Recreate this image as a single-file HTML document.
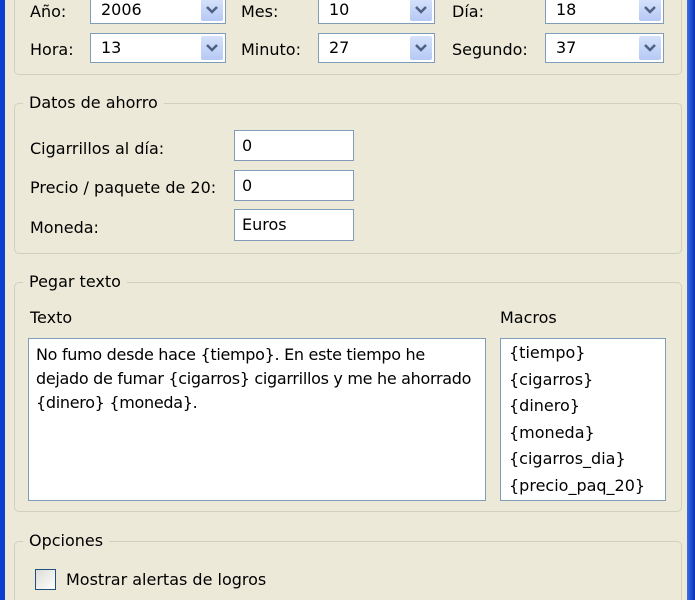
<!DOCTYPE html>
<html style="overflow:hidden;height:600px"><head><meta charset="utf-8"><style>
body{margin:0;width:695px;height:600px;overflow:hidden;background:#ece9d8;font-family:Tahoma,"DejaVu Sans","Liberation Sans",sans-serif;font-size:16px;color:#000;position:relative}
.a{position:absolute}
.edgeL{left:0;top:0;width:5px;height:600px;background:#0a3fd0}
.edgeR{left:687px;top:0;width:8px;height:600px;background:linear-gradient(90deg,#3a6ee8,#0930b8)}
.g{position:absolute;border:1px solid #d0d0bf;border-radius:5px}
.gt{position:absolute;background:#ece9d8;padding:0 6px;line-height:20px}
.box{position:absolute;background:#fff;border:1px solid #7f9db9;box-sizing:border-box;padding-left:10px;line-height:26px}
.btn{position:absolute;right:2px;top:2px;bottom:2px;width:22px;background:linear-gradient(#d6e2fb,#b6c9f5);border-radius:2px}
.btn svg{position:absolute;left:5px;top:50%;margin-top:-5px}
.l{position:absolute;line-height:20px}
</style></head><body>
<div class="a edgeL"></div><div class="a edgeR"></div>
<div class="g" style="left:14px;top:-10px;width:666px;height:83px"></div>
<div class="l" style="left:30px;top:2px">Año:</div>
<div class="box" style="left:90px;top:-4px;width:136px;height:28px">2006<div class="btn"><svg width="12" height="10"><path d="M1 2 L6 7 L11 2" stroke="#4d6185" stroke-width="2.5" fill="none"/></svg></div></div>
<div class="l" style="left:241px;top:2px">Mes:</div>
<div class="box" style="left:318px;top:-4px;width:117px;height:28px">10<div class="btn"><svg width="12" height="10"><path d="M1 2 L6 7 L11 2" stroke="#4d6185" stroke-width="2.5" fill="none"/></svg></div></div>
<div class="l" style="left:452px;top:2px">Día:</div>
<div class="box" style="left:545px;top:-4px;width:119px;height:28px">18<div class="btn"><svg width="12" height="10"><path d="M1 2 L6 7 L11 2" stroke="#4d6185" stroke-width="2.5" fill="none"/></svg></div></div>
<div class="l" style="left:30px;top:40px">Hora:</div>
<div class="box" style="left:90px;top:33px;width:136px;height:30px;line-height:28px">13<div class="btn"><svg width="12" height="10"><path d="M1 2 L6 7 L11 2" stroke="#4d6185" stroke-width="2.5" fill="none"/></svg></div></div>
<div class="l" style="left:241px;top:40px">Minuto:</div>
<div class="box" style="left:318px;top:33px;width:117px;height:30px;line-height:28px">27<div class="btn"><svg width="12" height="10"><path d="M1 2 L6 7 L11 2" stroke="#4d6185" stroke-width="2.5" fill="none"/></svg></div></div>
<div class="l" style="left:452px;top:40px">Segundo:</div>
<div class="box" style="left:545px;top:33px;width:119px;height:30px;line-height:28px">37<div class="btn"><svg width="12" height="10"><path d="M1 2 L6 7 L11 2" stroke="#4d6185" stroke-width="2.5" fill="none"/></svg></div></div>

<div class="g" style="left:14px;top:103px;width:666px;height:149px"></div>
<div class="gt" style="left:23px;top:93px">Datos de ahorro</div>
<div class="l" style="left:30px;top:139px">Cigarrillos al día:</div>
<div class="box" style="left:234px;top:130px;width:120px;height:31px;padding-left:7px;line-height:29px">0</div>
<div class="l" style="left:30px;top:178px">Precio / paquete de 20:</div>
<div class="box" style="left:234px;top:170px;width:120px;height:31px;padding-left:7px;line-height:29px">0</div>
<div class="l" style="left:30px;top:218px">Moneda:</div>
<div class="box" style="left:234px;top:209px;width:120px;height:32px;padding-left:7px;line-height:30px">Euros</div>

<div class="g" style="left:14px;top:282px;width:666px;height:228px"></div>
<div class="gt" style="left:23px;top:272px">Pegar texto</div>
<div class="l" style="left:30px;top:308px">Texto</div>
<div class="l" style="left:500px;top:308px">Macros</div>
<div class="box" style="left:28px;top:338px;width:458px;height:163px;padding:4px 2px 4px 7px;line-height:24px;white-space:nowrap;overflow:hidden;letter-spacing:-0.3px">No fumo desde hace {tiempo}. En este tiempo he<br>dejado de fumar {cigarros} cigarrillos y me he ahorrado<br>{dinero} {moneda}.</div>
<div class="box" style="left:500px;top:338px;width:166px;height:163px;padding:1px 8px;line-height:26.5px">{tiempo}<br>{cigarros}<br>{dinero}<br>{moneda}<br>{cigarros_dia}<br>{precio_paq_20}</div>

<div class="g" style="left:14px;top:541px;width:666px;height:70px"></div>
<div class="gt" style="left:23px;top:531px">Opciones</div>
<div class="a" style="left:35px;top:569px;width:21px;height:21px;box-sizing:border-box;border:1px solid #1c5180;background:linear-gradient(135deg,#dcdcd6,#fff)"></div>
<div class="l" style="left:66px;top:570px">Mostrar alertas de logros</div>
</body></html>
